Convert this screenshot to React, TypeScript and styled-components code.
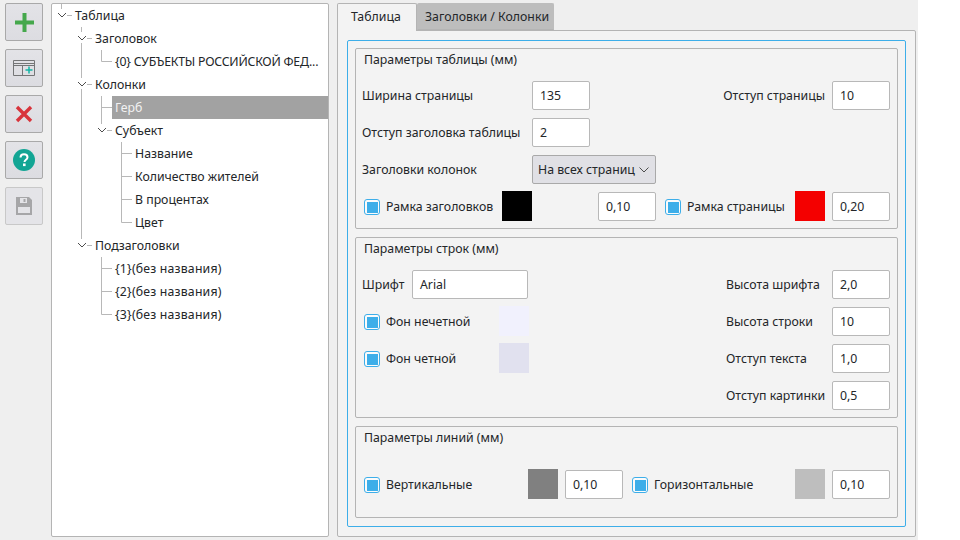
import { FunctionComponent, ReactNode } from "react";
import styled, { createGlobalStyle } from "styled-components";

const GlobalStyle = createGlobalStyle`
  html, body {
    margin: 0;
    padding: 0;
    background: #ffffff;
  }
  body {
    font-family: "Noto Sans", "Open Sans", sans-serif;
    font-size: 12.3px;
    color: #232629;
  }
`;

const Window = styled.div`
  width: 918px;
  height: 540px;
  box-sizing: border-box;
  padding: 3px 2px 3px 5px;
  display: flex;
  gap: 8px;
  background: #efefef;
`;

const Toolbar = styled.div`
  width: 38px;
  flex: none;
  display: flex;
  flex-direction: column;
  gap: 8px;
`;

const ToolButton = styled.button<{ $disabled?: boolean }>`
  width: 38px;
  height: 38px;
  padding: 0;
  box-sizing: border-box;
  display: flex;
  align-items: center;
  justify-content: center;
  border: 1px solid ${(p) => (p.$disabled ? "#c8c8c8" : "#a9a9a9")};
  border-radius: 2px;
  background: ${(p) => (p.$disabled ? "#e4e4e8" : "linear-gradient(#e3e3e7, #dcdce1)")};
`;

const TreePanel = styled.div`
  width: 278px;
  flex: none;
  box-sizing: border-box;
  background: #ffffff;
  border: 1px solid #b4b4b4;
  border-radius: 2px;
`;

const TreeRow = styled.div`
  display: flex;
  height: 23px;
  align-items: stretch;
`;

const GuideCell = styled.svg`
  width: 20px;
  height: 23px;
  flex: none;
  display: block;
`;

const TreeLabel = styled.div<{ $selected?: boolean; $tracking?: number }>`
  flex: 1;
  min-width: 0;
  padding-left: 3px;
  line-height: 23px;
  white-space: nowrap;
  overflow: hidden;
  letter-spacing: ${(p) => p.$tracking ?? 0}px;
  background: ${(p) => (p.$selected ? "#a2a2a2" : "transparent")};
  color: ${(p) => (p.$selected ? "#f2f2f2" : "#232629")};
`;

const TabArea = styled.div`
  width: 579px;
  flex: none;
  display: flex;
  flex-direction: column;
`;

const TabBar = styled.div`
  display: flex;
  height: 27px;
  flex: none;
`;

const Tab = styled.div<{ $active?: boolean }>`
  box-sizing: border-box;
  height: ${(p) => (p.$active ? "28px" : "27px")};
  width: ${(p) => (p.$active ? "80px" : "137px")};
  padding-left: ${(p) => (p.$active ? "13px" : "7px")};
  line-height: 26px;
  white-space: nowrap;
  background: ${(p) => (p.$active ? "#f3f3f3" : "#bdbdbd")};
  border: 1px solid ${(p) => (p.$active ? "#b4b4b4" : "#bdbdbd")};
  border-bottom: ${(p) => (p.$active ? "none" : "1px solid #b4b4b4")};
  border-radius: 2px 2px 0 0;
  position: relative;
  z-index: ${(p) => (p.$active ? 1 : 0)};
`;

const TabPanel = styled.div`
  flex: 1;
  box-sizing: border-box;
  padding: 9px;
  background: #f3f3f3;
  border: 1px solid #b4b4b4;
  border-radius: 0 2px 2px 2px;
`;

const Frame = styled.div`
  height: 100%;
  box-sizing: border-box;
  padding: 7px;
  display: flex;
  flex-direction: column;
  gap: 8px;
  border: 1px solid #3daee9;
  border-radius: 2px;
`;

const Group = styled.section<{ $height: number }>`
  height: ${(p) => p.$height}px;
  flex: none;
  box-sizing: border-box;
  padding: 0 7px 0 6px;
  border: 1px solid #b4b4b4;
  border-radius: 2px;
  display: flex;
  flex-direction: column;
`;

const GroupTitle = styled.div<{ $gap: number }>`
  height: 21px;
  line-height: 21px;
  padding-left: 2px;
  margin-bottom: ${(p) => p.$gap}px;
`;

const Row = styled.div`
  display: flex;
  align-items: center;
  height: 29px;
  margin-bottom: 8px;
`;

const FieldLabel = styled.span<{ $width?: number }>`
  flex: none;
  width: ${(p) => (p.$width ? `${p.$width}px` : "auto")};
  white-space: nowrap;
`;

const Spacer = styled.div`
  flex: 1;
`;

const Input = styled.div<{ $width?: number; $left?: number }>`
  flex: none;
  box-sizing: border-box;
  width: ${(p) => p.$width ?? 58}px;
  height: 29px;
  margin-left: ${(p) => p.$left ?? 0}px;
  padding-left: 7px;
  line-height: 27px;
  background: #ffffff;
  border: 1px solid #b8b8b8;
  border-radius: 2px;
`;

const Combo = styled.div`
  flex: none;
  box-sizing: border-box;
  width: 124px;
  height: 29px;
  padding: 0 5px;
  display: flex;
  align-items: center;
  justify-content: space-between;
  background: #e0e0e5;
  border: 1px solid #a9a9a9;
  border-radius: 2px;
  white-space: nowrap;
`;

const CheckWrap = styled.div<{ $width: number; $left?: number }>`
  flex: none;
  width: ${(p) => p.$width}px;
  margin-left: ${(p) => p.$left ?? 0}px;
  display: flex;
  align-items: center;
  gap: 6px;
  white-space: nowrap;
`;

const CheckBox = styled.span`
  width: 16px;
  height: 16px;
  flex: none;
  box-sizing: border-box;
  padding: 2px 1px 1px 2px;
  background: #fbfbfb;
  border: 1px solid #3daee9;
  border-radius: 3px;
  display: flex;
  &::after {
    content: "";
    flex: 1;
    background: #3daee9;
  }
`;

const Swatch = styled.div<{ $color: string; $left?: number }>`
  flex: none;
  width: 30px;
  height: 30px;
  margin-top: -1px;
  margin-left: ${(p) => p.$left ?? 0}px;
  background: ${(p) => p.$color};
`;

const Columns = styled.div`
  display: flex;
  justify-content: space-between;
`;

const LeftColumn = styled.div`
  width: 170px;
`;

const RightColumn = styled.div`
  width: 164px;
`;

const PlusIcon = () => (
  <svg width="19" height="19" viewBox="0 0 19 19">
    <path d="M7.500 0h4v7.500H19v4h-7.500V19h-4v-7.500H0v-4h7.500z" fill="#45a84c" />
  </svg>
);

const TableAddIcon = () => (
  <svg width="22" height="16" viewBox="0 0 22 16">
    <path d="M.5.5h21v15H.5zM.5 3.500h21M.5 5.500h21M9.500 5.500v10" fill="none" stroke="#747576" />
    <path d="M16 6.500v7M12.500 10h7" stroke="#12b5a5" strokeWidth="1.500" fill="none" />
  </svg>
);

const CloseIcon = () => (
  <svg width="18" height="18" viewBox="0 0 18 18">
    <path d="M2 2l14 14M16 2L2 16" stroke="#d8343c" strokeWidth="3.400" fill="none" />
  </svg>
);

const HelpIcon = () => (
  <svg width="22" height="22" viewBox="0 0 22 22">
    <circle cx="11" cy="11" r="11" fill="#12a594" />
    <path
      d="M7.500 8.500c0-2.200 1.500-3.300 3.500-3.300s3.500 1.100 3.500 3c0 2.700-3 2.400-3 4.800"
      fill="none"
      stroke="#ffffff"
      strokeWidth="2"
    />
    <rect x="10" y="14.500" width="2.600" height="2.600" fill="#ffffff" />
  </svg>
);

const SaveIcon = () => (
  <svg width="16" height="18" viewBox="0 0 16 18">
    <path d="M0 0h13l3 3v15H0z" fill="#a6a6a8" />
    <rect x="4" y="1" width="7" height="5" fill="#e4e4e8" />
    <rect x="7.500" y="2" width="2" height="3" fill="#a6a6a8" />
    <rect x="2" y="10" width="12" height="6" fill="#e4e4e8" />
  </svg>
);

type GuideKind = "none" | "line" | "tee" | "elbow" | "open" | "openLast";

const GUIDE_PATHS: Record<GuideKind, string> = {
  none: "",
  line: "M9.5 0V23",
  tee: "M9.5 0V23M9.500 11.500H20",
  elbow: "M9.5 0V11.500H20",
  open: "M9.5 0V5M9.5 16V23M15 11.500H20",
  openLast: "M9.5 0V5M15 11.500H20",
};

const Guide: FunctionComponent<{ kind: GuideKind }> = ({ kind }) => (
  <GuideCell viewBox="0 0 20 23">
    <path d={GUIDE_PATHS[kind]} stroke="#b8b8b8" fill="none" />
    {(kind === "open" || kind === "openLast") && (
      <path d="M6 9l4 4 4-4" stroke="#4d4d4d" fill="none" />
    )}
  </GuideCell>
);

const treeRows: { guides: GuideKind[]; text: string; selected?: boolean; tracking?: number }[] = [
  { guides: ["openLast"], text: "Таблица" },
  { guides: ["none", "open"], text: "Заголовок" },
  { guides: ["none", "line", "elbow"], text: "{0} СУБЪЕКТЫ РОССИЙСКОЙ ФЕД...", tracking: -0.23 },
  { guides: ["none", "open"], text: "Колонки" },
  { guides: ["none", "line", "tee"], text: "Герб", selected: true },
  { guides: ["none", "line", "openLast"], text: "Субъект" },
  { guides: ["none", "line", "none", "tee"], text: "Название" },
  { guides: ["none", "line", "none", "tee"], text: "Количество жителей" },
  { guides: ["none", "line", "none", "tee"], text: "В процентах" },
  { guides: ["none", "line", "none", "elbow"], text: "Цвет" },
  { guides: ["none", "openLast"], text: "Подзаголовки" },
  { guides: ["none", "none", "tee"], text: "{1}(без названия)", tracking: 0.18 },
  { guides: ["none", "none", "tee"], text: "{2}(без названия)", tracking: 0.18 },
  { guides: ["none", "none", "elbow"], text: "{3}(без названия)", tracking: 0.18 },
];

const Check: FunctionComponent<{ width: number; left?: number; children: ReactNode }> = ({
  width,
  left,
  children,
}) => (
  <CheckWrap $width={width} $left={left}>
    <CheckBox />
    <span>{children}</span>
  </CheckWrap>
);

const rightFields = [
  { label: "Высота шрифта", value: "2,0" },
  { label: "Высота строки", value: "10" },
  { label: "Отступ текста", value: "1,0" },
  { label: "Отступ картинки", value: "0,5" },
];

export default function App() {
  return (
    <>
      <GlobalStyle />
      <Window>
        <Toolbar>
          <ToolButton><PlusIcon /></ToolButton>
          <ToolButton><TableAddIcon /></ToolButton>
          <ToolButton><CloseIcon /></ToolButton>
          <ToolButton><HelpIcon /></ToolButton>
          <ToolButton $disabled><SaveIcon /></ToolButton>
        </Toolbar>

        <TreePanel>
          {treeRows.map((row) => (
            <TreeRow key={row.text}>
              {row.guides.map((kind, i) => (
                <Guide key={i} kind={kind} />
              ))}
              <TreeLabel $selected={row.selected} $tracking={row.tracking}>{row.text}</TreeLabel>
            </TreeRow>
          ))}
        </TreePanel>

        <TabArea>
          <TabBar>
            <Tab $active>Таблица</Tab>
            <Tab>Заголовки / Колонки</Tab>
          </TabBar>
          <TabPanel>
            <Frame>
              <Group $height={181}>
                <GroupTitle $gap={11}>Параметры таблицы (мм)</GroupTitle>
                <Row>
                  <FieldLabel $width={170}>Ширина страницы</FieldLabel>
                  <Input>135</Input>
                  <Spacer />
                  <FieldLabel>Отступ страницы</FieldLabel>
                  <Input $left={7}>10</Input>
                </Row>
                <Row>
                  <FieldLabel $width={170}>Отступ заголовка таблицы</FieldLabel>
                  <Input>2</Input>
                </Row>
                <Row>
                  <FieldLabel $width={170}>Заголовки колонок</FieldLabel>
                  <Combo>
                    На всех страниц
                    <svg width="12" height="8" viewBox="0 0 12 8">
                      <path d="M1.500 1.500L6 6l4.500-4.500" stroke="#4d4d4d" fill="none" />
                    </svg>
                  </Combo>
                </Row>
                <Row>
                  <Check width={138} left={2}>Рамка заголовков</Check>
                  <Swatch $color="#000000" />
                  <Input $left={66}>0,10</Input>
                  <Check width={130} left={9}>Рамка страницы</Check>
                  <Swatch $color="#f40000" />
                  <Input $left={7}>0,20</Input>
                </Row>
              </Group>

              <Group $height={181}>
                <GroupTitle $gap={11}>Параметры строк (мм)</GroupTitle>
                <Columns>
                  <LeftColumn>
                    <Row>
                      <FieldLabel $width={50}>Шрифт</FieldLabel>
                      <Input $width={116}>Arial</Input>
                    </Row>
                    <Row>
                      <Check width={135} left={2}>Фон нечетной</Check>
                      <Swatch $color="#f1f1fd" />
                    </Row>
                    <Row>
                      <Check width={135} left={2}>Фон четной</Check>
                      <Swatch $color="#e1e1ef" />
                    </Row>
                  </LeftColumn>
                  <RightColumn>
                    {rightFields.map((f) => (
                      <Row key={f.label}>
                        <FieldLabel $width={106}>{f.label}</FieldLabel>
                        <Input>{f.value}</Input>
                      </Row>
                    ))}
                  </RightColumn>
                </Columns>
              </Group>

              <Group $height={92}>
                <GroupTitle $gap={22}>Параметры линий (мм)</GroupTitle>
                <Row>
                  <Check width={164} left={2}>Вертикальные</Check>
                  <Swatch $color="#808080" />
                  <Input $left={7}>0,10</Input>
                  <Check width={163} left={9}>Горизонтальные</Check>
                  <Swatch $color="#bebebe" />
                  <Input $left={7}>0,10</Input>
                </Row>
              </Group>
            </Frame>
          </TabPanel>
        </TabArea>
      </Window>
    </>
  );
}
